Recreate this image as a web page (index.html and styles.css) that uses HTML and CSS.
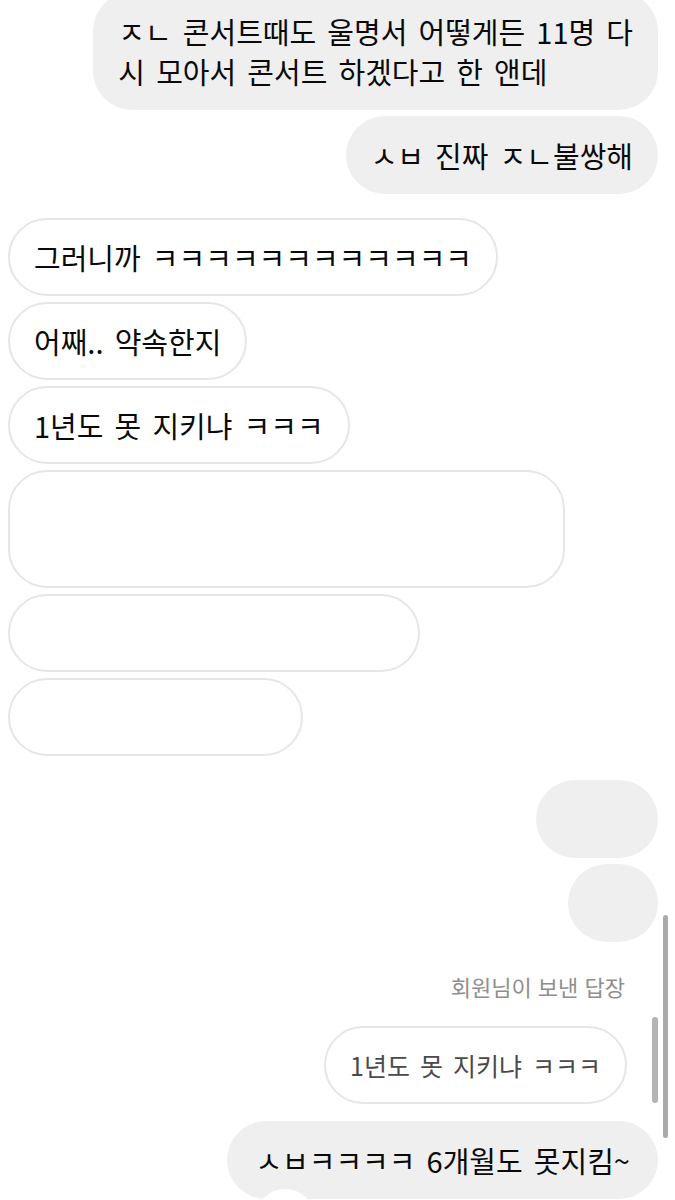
FILE: index.html
```html
<!DOCTYPE html>
<html lang="ko">
<head>
    <meta charset="UTF-8">
    <meta name="viewport" content="width=device-width, initial-scale=1.0">
    <title>메시지</title>
    <link rel="stylesheet" href="styles.css">
</head>
<body>
    <div class="chat">
        <div class="msg mine first">ㅈㄴ 콘서트때도 울명서 어떻게든 11명 다<br>시 모아서 콘서트 하겠다고 한 앤데</div>
        <div class="msg mine">ㅅㅂ 진짜 ㅈㄴ불쌍해</div>

        <div class="msg theirs group-start">그러니까 ㅋㅋㅋㅋㅋㅋㅋㅋㅋㅋㅋㅋ</div>
        <div class="msg theirs">어째.. 약속한지</div>
        <div class="msg theirs">1년도 못 지키냐 ㅋㅋㅋ</div>
        <div class="msg theirs blank blank-lg"></div>
        <div class="msg theirs blank blank-md"></div>
        <div class="msg theirs blank blank-sm"></div>

        <div class="msg mine blank blank-r1 group-start"></div>
        <div class="msg mine blank blank-r2"></div>

        <div class="reply-label">회원님이 보낸 답장</div>
        <div class="reply-quote">1년도 못 지키냐 ㅋㅋㅋ</div>
        <div class="msg mine last">ㅅㅂㅋㅋㅋㅋ 6개월도 못지킴~
            <span class="reaction"></span>
        </div>
    </div>

    <div class="scroll-track outer"></div>
    <div class="scroll-track inner"></div>
</body>
</html>
```

FILE: styles.css
```css
body {
    margin: 0;
    padding: 0;
    background: #fff;
    font-family: 'Noto Sans CJK KR', 'Noto Sans', sans-serif;
    color: #0a0a0a;
    overflow: hidden;
}

.chat {
    display: flex;
    flex-direction: column;
    padding: 0 17px 0 8px;
    margin-top: -8px;
}

.msg {
    box-sizing: border-box;
    font-size: 29px;
    line-height: 40px;
    word-spacing: 3px;
    border-radius: 39px;
    margin-top: 6px;
    white-space: nowrap;
}

.msg.first {
    margin-top: 0;
}

.mine {
    align-self: flex-end;
    background: #efefef;
    padding: 19px 25px;
}

.theirs {
    align-self: flex-start;
    background: #fff;
    border: 2px solid #e6e6e8;
    padding: 17px 24px;
}

.group-start {
    margin-top: 24px;
}

.blank {
    height: 78px;
    padding: 0;
}

.blank-lg {
    width: 557px;
    height: 118px;
}

.blank-md {
    width: 412px;
}

.blank-sm {
    width: 295px;
}

.blank-r1 {
    width: 122px;
}

.blank-r2 {
    width: 90px;
}

.reply-label {
    align-self: flex-end;
    margin: 31px 33px 0 0;
    font-size: 22px;
    line-height: 26px;
    color: #8e8e8e;
}

.reply-quote {
    align-self: flex-end;
    box-sizing: border-box;
    margin: 27px 31px 0 0;
    height: 78px;
    padding: 17px 24px;
    border: 2px solid #e6e6e8;
    border-radius: 39px;
    font-size: 25px;
    line-height: 40px;
    word-spacing: 3px;
    color: #4a4a4a;
}

.msg.last {
    position: relative;
    margin-top: 17px;
    padding: 19px 28px;
}

.reaction {
    position: absolute;
    left: 28px;
    top: 68px;
    width: 60px;
    height: 60px;
    border-radius: 50%;
    background: #fff;
}

.scroll-track {
    position: absolute;
    border-radius: 3px;
    background: #ababab;
}

.scroll-track.outer {
    left: 663px;
    top: 915px;
    width: 5px;
    height: 223px;
}

.scroll-track.inner {
    left: 652px;
    top: 1017px;
    width: 6px;
    height: 86px;
    background: #b4b4b4;
}
```
